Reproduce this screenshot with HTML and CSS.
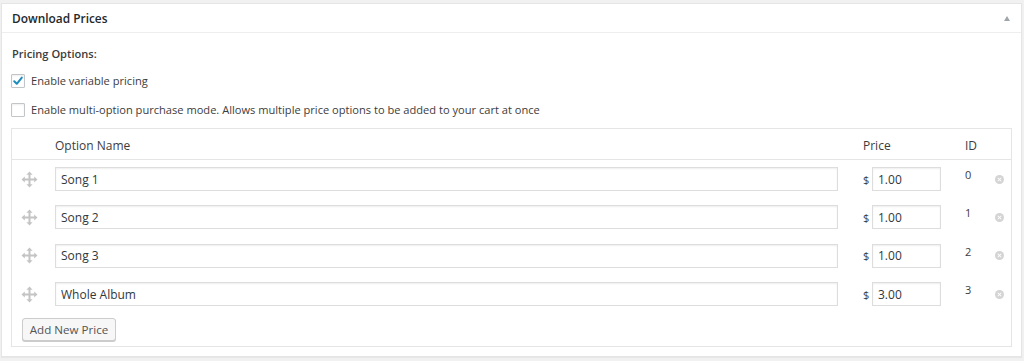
FILE: index.html
```html
<!DOCTYPE html>
<html>
<head>
<meta charset="utf-8">
<link rel="stylesheet" href="styles.css">
</head>
<body>
<div class="postbox">
  <div class="postbox-header">
    <h2 class="postbox-title">Download Prices</h2>
    <span class="toggle-arrow"></span>
  </div>
  <div class="postbox-inside">
    <p class="section-label">Pricing Options:</p>
    <label class="check-row">
      <span class="checkbox checked">
        <svg viewBox="0 0 14 14" width="14" height="14"><path d="M3.2 7.2 L5.8 9.8 L10.8 3.6" fill="none" stroke="#1e8cbe" stroke-width="2" stroke-linecap="round" stroke-linejoin="round"/></svg>
      </span>
      <span>Enable variable pricing</span>
    </label>
    <label class="check-row">
      <span class="checkbox"></span>
      <span>Enable multi-option purchase mode. Allows multiple price options to be added to your cart at once</span>
    </label>

    <div class="price-table">
      <div class="price-row price-head">
        <div></div>
        <div class="cell-name">Option Name</div>
        <div class="cell-price">Price</div>
        <div class="cell-id">ID</div>
        <div></div>
      </div>
      <div class="price-body">
        <div class="price-row">
          <div class="cell-drag"><svg class="move-icon" viewBox="0 0 17 17" width="17" height="17"><path d="M8.5 0.5 L11.6 3.8 H9.5 V7.5 H13.2 V5.4 L16.5 8.5 L13.2 11.6 V9.5 H9.5 V13.2 H11.6 L8.5 16.5 L5.4 13.2 H7.5 V9.5 H3.8 V11.6 L0.5 8.5 L3.8 5.4 V7.5 H7.5 V3.8 H5.4 Z" fill="#c4c4c4"/></svg></div>
          <div class="cell-name"><input class="text-input" type="text" value="Song 1"></div>
          <div class="cell-price"><span class="currency">$</span><input class="text-input price-input" type="text" value="1.00"></div>
          <div class="cell-id">0</div>
          <div class="cell-remove"><span class="remove-icon"></span></div>
        </div>
        <div class="price-row">
          <div class="cell-drag"><svg class="move-icon" viewBox="0 0 17 17" width="17" height="17"><path d="M8.5 0.5 L11.6 3.8 H9.5 V7.5 H13.2 V5.4 L16.5 8.5 L13.2 11.6 V9.5 H9.5 V13.2 H11.6 L8.5 16.5 L5.4 13.2 H7.5 V9.5 H3.8 V11.6 L0.5 8.5 L3.8 5.4 V7.5 H7.5 V3.8 H5.4 Z" fill="#c4c4c4"/></svg></div>
          <div class="cell-name"><input class="text-input" type="text" value="Song 2"></div>
          <div class="cell-price"><span class="currency">$</span><input class="text-input price-input" type="text" value="1.00"></div>
          <div class="cell-id">1</div>
          <div class="cell-remove"><span class="remove-icon"></span></div>
        </div>
        <div class="price-row">
          <div class="cell-drag"><svg class="move-icon" viewBox="0 0 17 17" width="17" height="17"><path d="M8.5 0.5 L11.6 3.8 H9.5 V7.5 H13.2 V5.4 L16.5 8.5 L13.2 11.6 V9.5 H9.5 V13.2 H11.6 L8.5 16.5 L5.4 13.2 H7.5 V9.5 H3.8 V11.6 L0.5 8.5 L3.8 5.4 V7.5 H7.5 V3.8 H5.4 Z" fill="#c4c4c4"/></svg></div>
          <div class="cell-name"><input class="text-input" type="text" value="Song 3"></div>
          <div class="cell-price"><span class="currency">$</span><input class="text-input price-input" type="text" value="1.00"></div>
          <div class="cell-id">2</div>
          <div class="cell-remove"><span class="remove-icon"></span></div>
        </div>
        <div class="price-row">
          <div class="cell-drag"><svg class="move-icon" viewBox="0 0 17 17" width="17" height="17"><path d="M8.5 0.5 L11.6 3.8 H9.5 V7.5 H13.2 V5.4 L16.5 8.5 L13.2 11.6 V9.5 H9.5 V13.2 H11.6 L8.5 16.5 L5.4 13.2 H7.5 V9.5 H3.8 V11.6 L0.5 8.5 L3.8 5.4 V7.5 H7.5 V3.8 H5.4 Z" fill="#c4c4c4"/></svg></div>
          <div class="cell-name"><input class="text-input" type="text" value="Whole Album"></div>
          <div class="cell-price"><span class="currency">$</span><input class="text-input price-input" type="text" value="3.00"></div>
          <div class="cell-id">3</div>
          <div class="cell-remove"><span class="remove-icon"></span></div>
        </div>
      </div>
      <div class="table-footer">
        <button class="button" type="button">Add New Price</button>
      </div>
    </div>
  </div>
</div>
</body>
</html>
```

FILE: styles.css
```css
html, body {
  margin: 0;
  padding: 0;
}
body {
  background: #f1f1f1;
  padding: 3px 2px 0 1px;
  font-family: "Open Sans", "Noto Sans", sans-serif;
  font-size: 11.1px;
  color: #3c3c3c;
  height: 361px;
  box-sizing: border-box;
  overflow: hidden;
}
.postbox {
  background: #fff;
  border: 1px solid #e5e5e5;
  box-shadow: 0 1px 1px rgba(0,0,0,0.04);
}
.postbox-header {
  height: 28px;
  border-bottom: 1px solid #eee;
  display: flex;
  align-items: center;
  justify-content: space-between;
  padding: 0 11px 0 10px;
}
.postbox-title {
  margin: 0;
  font-size: 11.9px;
  font-weight: 600;
  color: #23282d;
  line-height: 18px;
}
.toggle-arrow {
  width: 0;
  height: 0;
  border-left: 3.5px solid transparent;
  border-right: 3.5px solid transparent;
  border-bottom: 5px solid #a0a5aa;
}
.postbox-inside {
  padding: 12px 9px 9px 9px;
  display: flex;
  flex-direction: column;
}
.section-label {
  margin: 0;
  line-height: 18px;
  font-weight: 600;
  padding-left: 1px;
}
.check-row {
  display: flex;
  align-items: center;
  gap: 6px;
  height: 20px;
  margin-top: 8px;
  line-height: 20px;
}
.check-row + .check-row {
  margin-top: 9px;
}
.checkbox {
  width: 14px;
  height: 14px;
  box-sizing: border-box;
  border: 1px solid #c3c6c9;
  border-radius: 1px;
  box-shadow: inset 0 1px 2px rgba(0,0,0,0.07);
  background: #fff;
  display: flex;
  align-items: center;
  justify-content: center;
}
.checkbox svg {
  display: block;
  margin: -1px;
}
.price-table {
  margin-top: 8px;
  border: 1px solid #e5e5e5;
  font-size: 12px;
}
.price-row {
  display: grid;
  grid-template-columns: 43px 783px 103px 54px 9px;
  align-items: center;
}
.price-head {
  box-sizing: border-box;
  height: 31px;
  padding-top: 2px;
  border-bottom: 1px solid #e5e5e5;
}
.price-head .cell-price {
  padding-left: 25px;
}
.price-body .price-row {
  padding: 7.17px 0;
}
.cell-drag {
  display: flex;
  justify-content: center;
}
.move-icon {
  display: block;
  margin-left: -8px;
}
.text-input {
  box-sizing: border-box;
  height: 24px;
  width: 100%;
  border: 1px solid #ddd;
  box-shadow: inset 0 1px 2px rgba(0,0,0,0.07);
  background: #fff;
  font-family: "Open Sans", "Noto Sans", sans-serif;
  font-size: 12px;
  color: #32373c;
  padding: 0 5px;
  margin: 0;
  outline: none;
  display: block;
}
.cell-price {
  display: flex;
  align-items: center;
  padding-left: 25px;
}
.currency {
  width: 9px;
  font-size: 11px;
}
.price-input {
  width: 69px;
}
.cell-id {
  padding-left: 24px;
}
.price-body .cell-id {
  align-self: start;
  line-height: 14px;
  margin-top: 1px;
  font-size: 11px;
}
.cell-remove {
  display: flex;
  align-items: center;
  justify-content: center;
}
.remove-icon {
  width: 9px;
  height: 9px;
  border-radius: 50%;
  background: #d4d4d4;
  position: relative;
  display: block;
}
.remove-icon::before,
.remove-icon::after {
  content: "";
  position: absolute;
  left: 2px;
  top: 4px;
  width: 5px;
  height: 1px;
  background: #fff;
  transform: rotate(45deg);
}
.remove-icon::after {
  transform: rotate(-45deg);
}
.table-footer {
  padding: 4.5px 0 5px 10px;
}
.button {
  height: 23px;
  width: 94px;
  padding: 0;
  white-space: nowrap;
  text-align: center;
  font-family: "Open Sans", "Noto Sans", sans-serif;
  font-size: 11.6px;
  color: #555;
  background: #f7f7f7;
  border: 1px solid #ccc;
  border-radius: 3px;
  box-shadow: 0 1px 0 #ccc;
  line-height: 21px;
  display: block;
}
```
